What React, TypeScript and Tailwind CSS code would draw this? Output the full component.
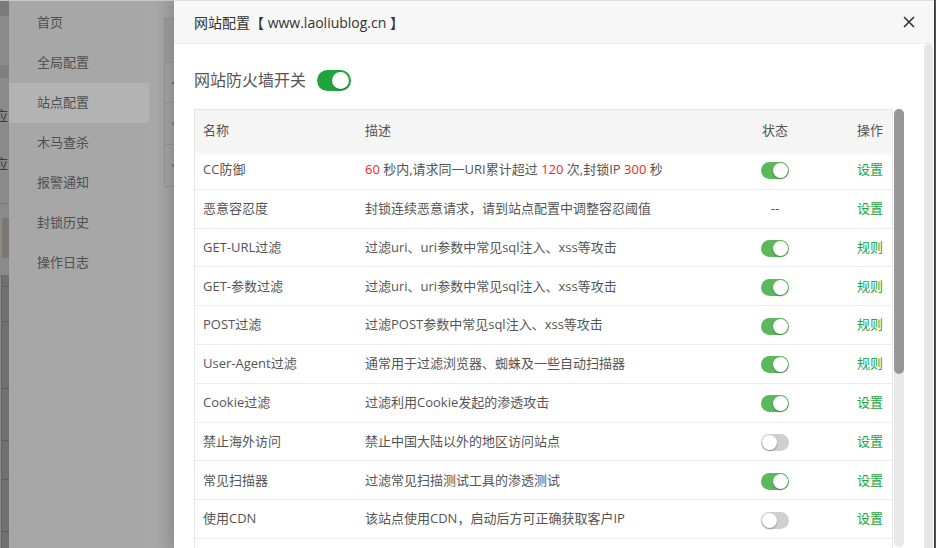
import React from "react";

type Row = {
  name: string;
  desc: React.ReactNode;
  state: "on" | "off" | "none";
  op: string;
};

const rows: Row[] = [
  {
    name: "CC防御",
    desc: (
      <>
        <span className="text-[#f52525]">60</span> 秒内,请求同一URI累计超过{" "}
        <span className="text-[#f52525]">120</span> 次,封锁IP{" "}
        <span className="text-[#f52525]">300</span> 秒
      </>
    ),
    state: "on",
    op: "设置",
  },
  { name: "恶意容忍度", desc: "封锁连续恶意请求，请到站点配置中调整容忍阈值", state: "none", op: "设置" },
  { name: "GET-URL过滤", desc: "过滤uri、uri参数中常见sql注入、xss等攻击", state: "on", op: "规则" },
  { name: "GET-参数过滤", desc: "过滤uri、uri参数中常见sql注入、xss等攻击", state: "on", op: "规则" },
  { name: "POST过滤", desc: "过滤POST参数中常见sql注入、xss等攻击", state: "on", op: "规则" },
  { name: "User-Agent过滤", desc: "通常用于过滤浏览器、蜘蛛及一些自动扫描器", state: "on", op: "规则" },
  { name: "Cookie过滤", desc: "过滤利用Cookie发起的渗透攻击", state: "on", op: "设置" },
  { name: "禁止海外访问", desc: "禁止中国大陆以外的地区访问站点", state: "off", op: "设置" },
  { name: "常见扫描器", desc: "过滤常见扫描测试工具的渗透测试", state: "on", op: "设置" },
  { name: "使用CDN", desc: "该站点使用CDN，启动后方可正确获取客户IP", state: "off", op: "设置" },
];

function SmallToggle({ on }: { on: boolean }) {
  return (
    <div
      className={
        "w-[28px] h-[17px] rounded-full flex items-center p-px mt-[2px] " +
        (on ? "bg-[#5cb85c] justify-end" : "bg-[#cfcfcf] justify-start")
      }
    >
      <div className="w-[15px] h-[15px] rounded-full bg-white shadow-[0_1px_2px_rgba(0,0,0,0.35)]" />
    </div>
  );
}

const menu = ["首页", "全局配置", "站点配置", "木马查杀", "报警通知", "封锁历史", "操作日志"];

export default function App() {
  return (
    <div className="w-[936px] h-[548px] overflow-hidden flex bg-[#a6a6a6] font-['Open_Sans','Noto_Sans_CJK_SC',sans-serif]">
      {/* far-left dimmed page strip */}
      <div className="w-[9px] shrink-0 flex flex-col overflow-hidden border-t border-[#c4c4c4] bg-[#8a8a8a]">
        <div className="h-[15px] bg-[#7a7a7a]" />
        <div className="h-[49px]" />
        <div className="h-[13px] bg-[#7f7f7f]" />
        <div className="h-[125px] flex flex-col">
          <div className="h-[28px]" />
          <div className="h-[20px] text-[14px] leading-[20px] text-[#3a3a3a] -ml-[6px] whitespace-nowrap">应</div>
          <div className="h-[28px]" />
          <div className="h-[20px] text-[14px] leading-[20px] text-[#3a3a3a] -ml-[6px] whitespace-nowrap">应</div>
        </div>
        <div className="h-px bg-[#777]" />
        <div className="h-[14px]" />
        <div className="h-[40px] ml-[2px] rounded-l-[3px] bg-[#7e776f]" />
        <div className="h-[17px]" />
        <div className="flex-1 ml-[1px] border-l border-[#666] bg-[#717171] flex flex-col">
          <div className="h-[12px] border-b border-[#5f5f5f]" />
          <div className="h-[35px] border-b border-[#5f5f5f]" />
          <div className="h-[67px] border-b border-[#5f5f5f]" />
          <div className="h-[52px] border-b border-[#5f5f5f]" />
          <div className="h-[39px] border-b border-[#5f5f5f]" />
          <div className="h-[52px] border-b border-[#5f5f5f]" />
        </div>
      </div>

      {/* sidebar */}
      <div className="w-[140px] shrink-0 bg-[#a7a7a7] border-t border-[#c8c8c8] pt-[2px] flex flex-col">
        {menu.map((m, i) => (
          <div
            key={m}
            className={
              "h-[40px] flex items-center pl-[28px] text-[13px] text-[#4f4f4f] " +
              (i === 2 ? "bg-[#b3b3b3]" : "")
            }
          >
            {m}
          </div>
        ))}
      </div>

      {/* gap area between sidebar and modal */}
      <div className="w-[25px] shrink-0 border-t border-[#c8c8c8] bg-gradient-to-r from-[#a9a9a9] to-[#9f9f9f] flex flex-col">
        <div className="h-[17px]" />
        <div className="ml-[15px] h-[169px] border-l border-t border-b border-[#929292] flex flex-col">
          <div className="h-[44px] bg-[#9b9b9b] border-b border-[#939393]" />
          <div className="h-[40px] border-b border-[#939393] flex items-center justify-end">
            <div className="w-[2px] h-[2px] bg-[#4a7a70]" />
          </div>
          <div className="h-[42px] border-b border-[#939393] flex items-center justify-end">
            <div className="w-[2px] h-[3px] bg-[#70807c]" />
          </div>
          <div className="flex-1 flex items-center justify-end">
            <div className="w-[2px] h-[3px] bg-[#70807c]" />
          </div>
        </div>
      </div>

      {/* modal */}
      <div className="w-[760px] shrink-0 bg-white flex flex-col border-t border-[#e0e0e0] shadow-[-4px_0_14px_rgba(0,0,0,0.12)] relative">
        <div className="h-[43px] shrink-0 bg-[#f7f7f7] border-b border-[#ebebeb] flex items-center justify-between pl-[20px] pr-[19px]">
          <div className="text-[14px] text-[#333]">网站配置【 www.laoliublog.cn 】</div>
          <svg width="12" height="12" viewBox="0 0 12 12">
            <path d="M1 1 L11 11 M11 1 L1 11" stroke="#333" strokeWidth="1.6" fill="none" />
          </svg>
        </div>
        <div className="flex-1 flex min-h-0">
          <div className="w-[750px] pl-[20px] pt-[20px] flex flex-col min-h-0">
            <div className="h-[32px] flex items-center">
              <span className="text-[16px] text-[#555]">网站防火墙开关</span>
              <div className="ml-[11px] w-[34px] h-[21px] rounded-full bg-[#20a53a] flex items-center justify-end pr-[2px]">
                <div className="w-[17px] h-[17px] rounded-full bg-white shadow-[0_1px_2px_rgba(0,0,0,0.25)]" />
              </div>
            </div>
            <div className="mt-[13px] flex flex-1 min-h-0">
              <div className="w-[699px] border-l border-t border-r border-[#e6e6e6] flex flex-col overflow-hidden">
                <div className="h-[41px] shrink-0 bg-[#f5f5f5] flex items-center text-[13px] text-[#555] relative z-10 shadow-[0_2px_4px_rgba(0,0,0,0.07)]">
                  <div className="w-[162px] pl-2">名称</div>
                  <div className="flex-1 pl-2">描述</div>
                  <div className="w-[80px] text-center">状态</div>
                  <div className="w-[77px] text-right pr-[9px]">操作</div>
                </div>
                {rows.map((r) => (
                  <div
                    key={r.name}
                    className="h-[38.8px] shrink-0 border-b border-[#ececec] flex items-center text-[13px] text-[#555]"
                  >
                    <div className="w-[162px] pl-2 whitespace-nowrap">{r.name}</div>
                    <div className="flex-1 pl-2 whitespace-nowrap">{r.desc}</div>
                    <div className="w-[80px] flex justify-center">
                      {r.state === "none" ? (
                        <span className="text-[#555]">--</span>
                      ) : (
                        <SmallToggle on={r.state === "on"} />
                      )}
                    </div>
                    <div className="w-[77px] text-right pr-[9px] text-[#20a53a]">{r.op}</div>
                  </div>
                ))}
              </div>
              <div className="ml-px w-[10px] h-[438px] rounded-full bg-[#e9e9e9] flex flex-col">
                <div className="h-[265px] rounded-full bg-[#979797]" />
              </div>
            </div>
          </div>
          <div className="w-[9px] rounded-t-full bg-[#e6e6e6]" />
          <div className="w-px bg-white" />
        </div>
      </div>

      {/* right edge */}
      <div className="w-[2px] shrink-0 bg-[#555] border-l border-[#3a3a3a]" />
    </div>
  );
}
